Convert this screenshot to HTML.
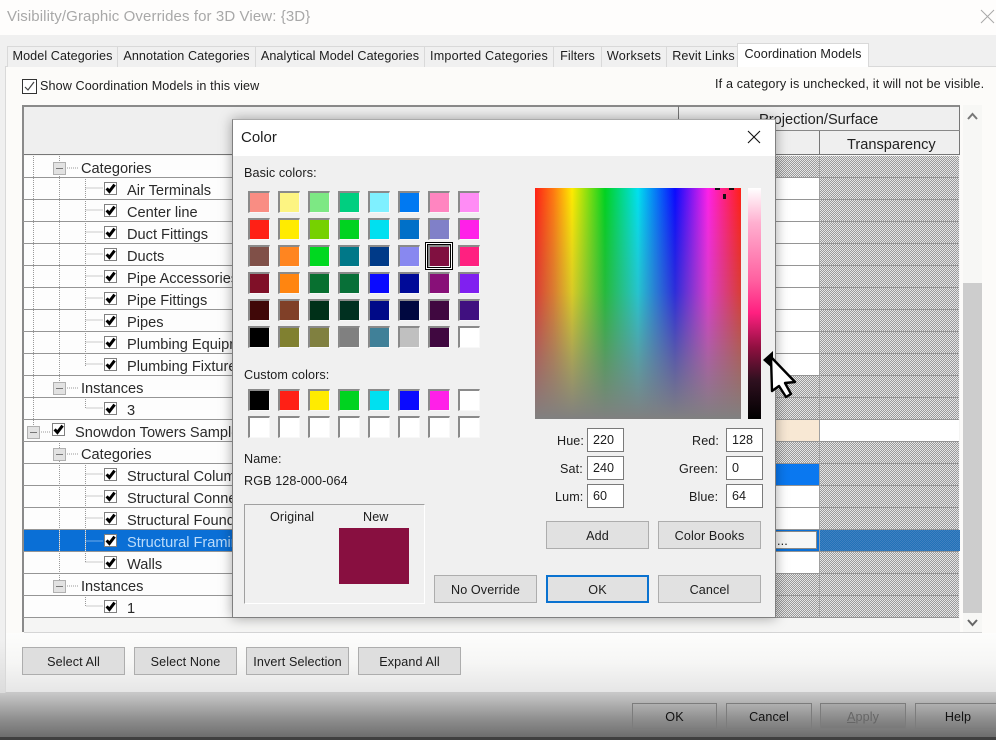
<!DOCTYPE html>
<html><head><meta charset="utf-8"><title>Color</title>
<style>
html,body{margin:0;padding:0}
body{width:996px;height:740px;overflow:hidden;position:relative;background:#f0f0f0;font-family:"Liberation Sans",sans-serif;color:#1c1c1c}
.a{position:absolute;box-sizing:border-box}
.l{position:absolute;white-space:nowrap;line-height:20px;font-size:12.6px;letter-spacing:.1px}
.r{position:absolute;white-space:nowrap;line-height:22px;font-size:14.6px;color:#2a2a2a;margin-top:1px}
.tab{position:absolute;top:46px;height:21px;box-sizing:border-box;background:#f0f0f0;border:1px solid #d9d9d9;border-bottom:0;text-align:center;font-size:12.6px;line-height:19px;white-space:nowrap;letter-spacing:.08px}
.btn{position:absolute;box-sizing:border-box;height:28px;width:103px;background:#e1e1e1;border:1px solid #adadad;text-align:center;font-size:12.6px;line-height:28px;color:#1c1c1c;letter-spacing:.1px}
.b2{top:703px;height:26px;line-height:26px;background:transparent;border-color:#7c7c7c;color:#111}
.rl{position:absolute;left:23px;width:936px;height:1px;background:#959595}
.h{background:repeating-conic-gradient(#9a9a9a 0 25%,#e6e6e6 0 50%) 0 0/2px 2px}
.w{background:#fff}
.in{position:absolute;box-sizing:border-box;width:37px;height:24px;background:#fff;border:1px solid #7a7a7a;font-size:12.6px;line-height:22px;padding-left:5px}
.grid{position:absolute;left:248px;display:grid;grid-template-columns:repeat(8,22px);grid-auto-rows:22px;gap:5px 8px}
.grid i{display:block;box-sizing:border-box;border:2px solid #8a8a8a;border-right:1px solid #f8f8f8;border-bottom:1px solid #f8f8f8}
</style></head><body>

<div class="a" style="left:0;top:0;width:996px;height:35px;background:#fefdfc"></div>
<div class="l" style="left:7px;top:7px;font-size:15px;color:#a8a8a8;letter-spacing:.1px">Visibility/Graphic Overrides for 3D View: {3D}</div>
<svg class="a" style="left:980px;top:9px" width="16" height="16"><path d="M1 1L14 14M14 1L1 14" stroke="#a8a8a8" fill="none"/></svg>

<div class="a" style="left:5px;top:66px;width:991px;height:567px;background:#fcfbf9;border-left:1px solid #d9d9d9;border-top:1px solid #d9d9d9"></div>
<div class="a" style="left:5px;top:633px;width:991px;height:60px;background:linear-gradient(180deg,#fdfdfc 0%,#f6f6f5 50%,#e6e6e6 100%);border-left:1px solid #d9d9d9;border-bottom:1px solid #c8c8c8"></div>
<div class="a" style="left:0;top:693px;width:996px;height:44px;background:linear-gradient(180deg,#c8c8c8 0%,#8e8e8e 60%,#6e6e6e 100%)"></div>
<div class="a" style="left:0;top:737px;width:996px;height:3px;background:#404040"></div>
<div class="a" style="left:0;top:640px;width:5px;height:53px;background:linear-gradient(180deg,#f0f0f0,#dcdcdc)"></div>

<div class="tab" style="left:7px;width:111px">Model Categories</div>
<div class="tab" style="left:117px;width:139px">Annotation Categories</div>
<div class="tab" style="left:255px;width:170px">Analytical Model Categories</div>
<div class="tab" style="left:424px;width:130px;letter-spacing:.2px">Imported Categories</div>
<div class="tab" style="left:553px;width:49px">Filters</div>
<div class="tab" style="left:601px;width:66px;letter-spacing:.25px">Worksets</div>
<div class="tab" style="left:666px;width:72px;padding-left:3px">Revit Links</div>
<div class="tab" style="left:737px;top:43px;width:132px;height:24px;background:#fff;line-height:21px;z-index:2">Coordination Models</div>

<div class="a" style="left:22px;top:79px;width:15px;height:15px;background:#fff;border:1px solid #333"></div>
<svg class="a" style="left:22px;top:79px" width="15" height="15"><path d="M3 8L6 11L12 3" stroke="#444" stroke-width="1.2" fill="none"/></svg>
<div class="l" style="left:40px;top:76px">Show Coordination Models in this view</div>
<div class="l" style="left:715px;top:74px;letter-spacing:.16px">If a category is unchecked, it will not be visible.</div>

<!-- table -->
<div class="a" style="left:22px;top:105px;width:938px;height:527px;background:#f5f5f4;border-top:2px solid #8a8a8a;border-left:2px solid #8a8a8a"></div>
<div class="a" style="left:24px;top:632px;width:958px;height:1px;background:#d5d5d5"></div>
<div class="a" style="left:24px;top:107px;width:936px;height:48px;background:#efefef;border-bottom:1px solid #777"></div>
<div class="a" style="left:678px;top:106px;width:1px;height:49px;background:#777"></div>
<div class="a" style="left:959px;top:106px;width:1px;height:49px;background:#777"></div>
<div class="a" style="left:679px;top:130px;width:281px;height:1px;background:#888"></div>
<div class="a" style="left:819px;top:131px;width:1px;height:24px;background:#777"></div>
<div class="r" style="left:759px;top:108px;color:#222">Projection/Surface</div>
<div class="r" style="left:847px;top:133px;color:#222">Transparency</div>

<!-- left rows -->
<div class="a w" style="left:24px;top:156px;width:654px;height:461px;background:#fdfdfd"></div>

<!-- right cells -->
<div class="a h" style="left:678px;top:156px;width:281px;height:461px"></div>
<div class="a w" style="left:678px;top:178px;width:141px;height:197px"></div>
<div class="a" style="left:678px;top:420px;width:141px;height:21px;background:#f8e8d4"></div>
<div class="a w" style="left:820px;top:420px;width:139px;height:21px"></div>
<div class="a" style="left:678px;top:464px;width:141px;height:21px;background:#0a78f0"></div>
<div class="a w" style="left:678px;top:486px;width:141px;height:43px"></div>
<div class="a" style="left:24px;top:530px;width:936px;height:21px;background:#0a6fd6"></div>
<div class="a" style="left:820px;top:530px;width:140px;height:21px;background:repeating-conic-gradient(#2272b8 0 25%,#4080c0 0 50%) 0 0/2px 2px"></div>
<div class="a" style="left:760px;top:531px;width:57px;height:18px;background:#f6f6f6;border:1px solid #888"></div>
<div class="l" style="left:777px;top:531px">...</div>
<div class="a w" style="left:678px;top:552px;width:141px;height:21px"></div>
<div class="a" style="left:819px;top:156px;width:1px;height:461px;background:#a0a0a0"></div>

<!-- row lines -->
<div class="rl" style="top:177px"></div><div class="rl" style="top:199px"></div><div class="rl" style="top:221px"></div><div class="rl" style="top:243px"></div><div class="rl" style="top:265px"></div><div class="rl" style="top:287px"></div><div class="rl" style="top:309px"></div><div class="rl" style="top:331px"></div><div class="rl" style="top:353px"></div><div class="rl" style="top:375px"></div><div class="rl" style="top:397px"></div><div class="rl" style="top:419px"></div><div class="rl" style="top:441px"></div><div class="rl" style="top:463px"></div><div class="rl" style="top:485px"></div><div class="rl" style="top:507px"></div><div class="rl" style="top:529px"></div><div class="rl" style="top:551px"></div><div class="rl" style="top:573px"></div><div class="rl" style="top:595px"></div><div class="rl" style="top:617px"></div>

<!-- tree -->
<svg class="a" style="left:0;top:0" width="240" height="640">
<defs>
<g id="c"><rect x=".5" y=".5" width="12" height="12" fill="#fff" stroke="#808080"/><path d="M2.6 6.4L5.4 9.4L10.6 2.6" stroke="#000" stroke-width="3" fill="none"/></g>
<g id="m"><rect x=".5" y=".5" width="12" height="12" fill="#e2e2e2" stroke="#b0b0b0"/><path d="M3 6.5H10" stroke="#777" fill="none"/></g>
</defs>
<g stroke="#999" stroke-dasharray="1 1" fill="none">
<path d="M33.5 156V431M59.5 156V388M85.5 177V366M85.5 188H103M85.5 210H103M85.5 232H103M85.5 254H103M85.5 276H103M85.5 298H103M85.5 320H103M85.5 342H103M85.5 364H103M85.5 397V408H103M65 168H78M65 388H78"/>
<path d="M59.5 441V586M85.5 463V562M85.5 474H103M85.5 496H103M85.5 518H103M85.5 562H103M65 454H78M65 586H78M85.5 595V606H103M39 432H50"/>
</g>
<path d="M59.5 530V551M85.5 530V551M85.5 541H103" stroke="#cfe4fa" stroke-dasharray="1 1" fill="none"/>
<use href="#m" x="53" y="162"/><use href="#m" x="53" y="382"/><use href="#m" x="27" y="426"/><use href="#m" x="53" y="448"/><use href="#m" x="53" y="580"/>
<use href="#c" x="104" y="182"/><use href="#c" x="104" y="204"/><use href="#c" x="104" y="226"/><use href="#c" x="104" y="248"/><use href="#c" x="104" y="270"/><use href="#c" x="104" y="292"/><use href="#c" x="104" y="314"/><use href="#c" x="104" y="336"/><use href="#c" x="104" y="358"/><use href="#c" x="104" y="402"/>
<use href="#c" x="52" y="423"/>
<use href="#c" x="104" y="468"/><use href="#c" x="104" y="490"/><use href="#c" x="104" y="512"/><use href="#c" x="104" y="534"/><use href="#c" x="104" y="556"/><use href="#c" x="104" y="600"/>
</svg>
<div class="r" style="left:81px;top:157px">Categories</div>
<div class="r" style="left:127px;top:179px">Air Terminals</div>
<div class="r" style="left:127px;top:201px">Center line</div>
<div class="r" style="left:127px;top:223px">Duct Fittings</div>
<div class="r" style="left:127px;top:245px">Ducts</div>
<div class="r" style="left:127px;top:267px">Pipe Accessories</div>
<div class="r" style="left:127px;top:289px">Pipe Fittings</div>
<div class="r" style="left:127px;top:311px">Pipes</div>
<div class="r" style="left:127px;top:333px">Plumbing Equipment</div>
<div class="r" style="left:127px;top:355px">Plumbing Fixtures</div>
<div class="r" style="left:81px;top:377px">Instances</div>
<div class="r" style="left:127px;top:399px">3</div>
<div class="r" style="left:75px;top:421px">Snowdon Towers Sample</div>
<div class="r" style="left:81px;top:443px">Categories</div>
<div class="r" style="left:127px;top:465px">Structural Columns</div>
<div class="r" style="left:127px;top:487px">Structural Connections</div>
<div class="r" style="left:127px;top:509px">Structural Foundations</div>
<div class="r" style="left:127px;top:531px;color:#bcdcfa">Structural Framing</div>
<div class="r" style="left:127px;top:553px">Walls</div>
<div class="r" style="left:81px;top:575px">Instances</div>
<div class="r" style="left:127px;top:597px">1</div>

<!-- scrollbar -->
<div class="a" style="left:963px;top:105px;width:19px;height:527px;background:#f7f7f5"></div>
<div class="a" style="left:963px;top:283px;width:19px;height:330px;background:#cdcdcd"></div>
<svg class="a" style="left:963px;top:105px" width="19" height="527"><path d="M5 14L9.5 9L14 14" stroke="#777" stroke-width="2" fill="none"/><path d="M5 515L9.5 520L14 515" stroke="#666" stroke-width="2" fill="none"/></svg>

<!-- main buttons -->
<div class="btn" style="left:22px;top:647px;background:#dedede">Select All</div>
<div class="btn" style="left:134px;top:647px;background:#dedede">Select None</div>
<div class="btn" style="left:246px;top:647px;background:#dedede">Invert Selection</div>
<div class="btn" style="left:358px;top:647px;background:#dedede">Expand All</div>
<div class="btn b2" style="left:632px;width:85px">OK</div>
<div class="btn b2" style="left:726px;width:86px">Cancel</div>
<div class="btn b2" style="left:820px;width:86px;color:#666;background:rgba(0,0,0,.04)"><u>A</u>pply</div>
<div class="btn b2" style="left:915px;width:86px">Help</div>

<!-- dialog -->
<div class="a" style="left:232px;top:119px;width:544px;height:499px;background:#f0f0f0;border:1px solid #808080;border-top-color:#aaa;box-shadow:0 0 12px rgba(0,0,0,.35)"></div>
<div class="a" style="left:233px;top:120px;width:542px;height:36px;background:#fff"></div>
<div class="l" style="left:241px;top:128px;font-size:15px;letter-spacing:0">Color</div>
<svg class="a" style="left:747px;top:130px" width="14" height="14"><path d="M1 1L13 13M13 1L1 13" stroke="#111" stroke-width="1.1" fill="none"/></svg>

<div class="l" style="left:244px;top:163px">Basic colors:</div>
<div class="grid" style="top:191px">
<i style="background:#f98d83"></i><i style="background:#fdf482"></i><i style="background:#7de884"></i><i style="background:#00cf80"></i><i style="background:#7ff0ff"></i><i style="background:#0079f2"></i><i style="background:#ff85c0"></i><i style="background:#ff8cf5"></i>
<i style="background:#ff2015"></i><i style="background:#ffeb00"></i><i style="background:#76d100"></i><i style="background:#00d320"></i><i style="background:#00e0f0"></i><i style="background:#0070c8"></i><i style="background:#8080c8"></i><i style="background:#ff20e8"></i>
<i style="background:#805048"></i><i style="background:#ff8520"></i><i style="background:#00d820"></i><i style="background:#007888"></i><i style="background:#003a88"></i><i style="background:#8888f0"></i><i style="background:#801040;outline:1px solid #000;box-shadow:0 0 0 2px #fff,0 0 0 3px #000"></i><i style="background:#ff2080"></i>
<i style="background:#801028"></i><i style="background:#ff8510"></i><i style="background:#087030"></i><i style="background:#087038"></i><i style="background:#0a0aff"></i><i style="background:#000a98"></i><i style="background:#881078"></i><i style="background:#8020f0"></i>
<i style="background:#400808"></i><i style="background:#804028"></i><i style="background:#003018"></i><i style="background:#003020"></i><i style="background:#000a88"></i><i style="background:#000840"></i><i style="background:#400840"></i><i style="background:#401080"></i>
<i style="background:#000"></i><i style="background:#808030"></i><i style="background:#808040"></i><i style="background:#808080"></i><i style="background:#408098"></i><i style="background:#c0c0c0"></i><i style="background:#400840"></i><i style="background:#fff"></i>
</div>
<div class="l" style="left:244px;top:365px">Custom colors:</div>
<div class="grid" style="top:389px">
<i style="background:#000"></i><i style="background:#ff2015"></i><i style="background:#ffeb00"></i><i style="background:#00d320"></i><i style="background:#00e0f0"></i><i style="background:#0a0aff"></i><i style="background:#ff20e8"></i><i style="background:#fff"></i>
<i style="background:#fff"></i><i style="background:#fff"></i><i style="background:#fff"></i><i style="background:#fff"></i><i style="background:#fff"></i><i style="background:#fff"></i><i style="background:#fff"></i><i style="background:#fff"></i>
</div>
<div class="l" style="left:244px;top:449px">Name:</div>
<div class="l" style="left:244px;top:471px">RGB 128-000-064</div>
<div class="a" style="left:244px;top:504px;width:181px;height:100px;border:1px solid #fff;border-top-color:#a0a0a0;border-left-color:#a0a0a0"></div>
<div class="l" style="left:270px;top:507px">Original</div>
<div class="l" style="left:363px;top:507px">New</div>
<div class="a" style="left:339px;top:528px;width:70px;height:56px;background:#880f40"></div>

<div class="a" style="left:535px;top:188px;width:206px;height:231px;background:linear-gradient(180deg,rgba(128,128,128,0) 0%,rgba(128,128,128,.3) 45%,rgba(128,128,128,.7) 75%,#808080 100%),linear-gradient(90deg,#ff2015 0%,#ff7a10 9%,#ffeb00 18%,#00d320 34%,#00e0f0 50%,#0a0aff 68%,#ff20e8 84%,#ff2015 100%)"></div>
<div class="a" style="left:715px;top:188px;width:5px;height:2px;background:#111"></div>
<div class="a" style="left:729px;top:188px;width:5px;height:2px;background:#111"></div>
<div class="a" style="left:723px;top:194px;width:3px;height:5px;background:#111"></div>
<div class="a" style="left:748px;top:188px;width:13px;height:231px;background:linear-gradient(180deg,#fff 0%,#ffb0d0 15%,#ff60a0 40%,#ff2080 54%,#901040 69%,#301020 83%,#000 100%)"></div>

<div class="l" style="left:557px;top:431px">Hue:</div>
<div class="l" style="left:560px;top:459px">Sat:</div>
<div class="l" style="left:555px;top:487px">Lum:</div>
<div class="l" style="left:692px;top:431px">Red:</div>
<div class="l" style="left:679px;top:459px">Green:</div>
<div class="l" style="left:689px;top:487px">Blue:</div>
<div class="in" style="left:587px;top:428px">220</div>
<div class="in" style="left:587px;top:456px">240</div>
<div class="in" style="left:587px;top:484px">60</div>
<div class="in" style="left:726px;top:428px">128</div>
<div class="in" style="left:726px;top:456px">0</div>
<div class="in" style="left:726px;top:484px">64</div>

<div class="btn" style="left:546px;top:521px">Add</div>
<div class="btn" style="left:658px;top:521px">Color Books</div>
<div class="btn" style="left:434px;top:575px">No Override</div>
<div class="btn" style="left:546px;top:575px;border:2px solid #0a72d0;line-height:26px">OK</div>
<div class="btn" style="left:658px;top:575px">Cancel</div>

<svg class="a" style="left:760px;top:348px" width="40" height="54"><path d="M3 12L13 3V21Z" fill="#000"/><path d="M11 9L35 34L25 35L31 46L26 49L19 38L12 43Z" fill="#fff" stroke="#000" stroke-width="2.4" stroke-linejoin="round"/></svg>
</body></html>
